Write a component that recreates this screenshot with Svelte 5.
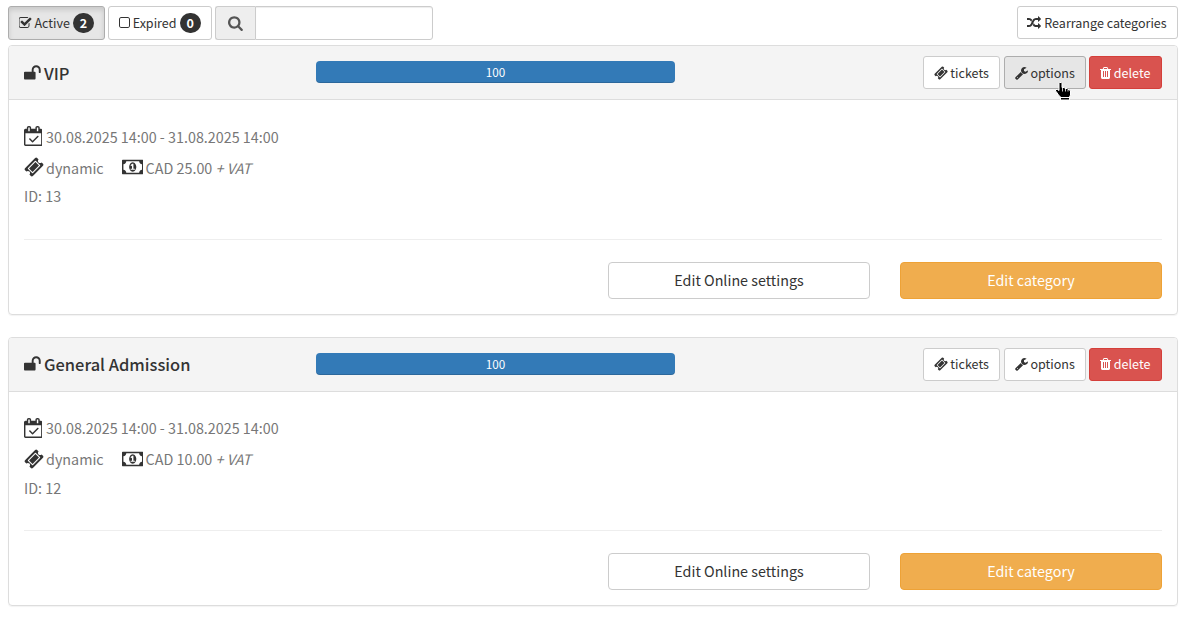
<script>
  const icons = {
    checked: [128, 1664, 'M1472 930v318q0 119-84.5 203.5t-203.5 84.5h-832q-119 0-203.5-84.5t-84.5-203.5v-832q0-119 84.5-203.5t203.5-84.5h832q63 0 117 25 15 7 18 23 3 17-9 29l-49 49q-10 10-23 10-3 0-9-2-23-6-45-6h-832q-66 0-113 47t-47 113v832q0 66 47 113t113 47h832q66 0 113-47t47-113v-254q0-13 9-22l64-64q10-10 23-10 6 0 12 3 20 8 20 29zm231-489l-814 814q-24 24-57 24t-57-24l-430-430q-24-24-24-57t24-57l110-110q24-24 57-24t57 24l263 263 647-647q24-24 57-24t57 24l110 110q24 24 24 57t-24 57z'],
    unchecked: [192, 1408, 'M1312 256h-832q-66 0-113 47t-47 113v832q0 66 47 113t113 47h832q66 0 113-47t47-113v-832q0-66-47-113t-113-47zm288 160v832q0 119-84.5 203.5t-203.5 84.5h-832q-119 0-203.5-84.5t-84.5-203.5v-832q0-119 84.5-203.5t203.5-84.5h832q119 0 203.5 84.5t84.5 203.5z'],
    search: [64, 1664, 'M1216 832q0-185-131.5-316.5t-316.5-131.5-316.5 131.5-131.5 316.5 131.5 316.5 316.5 131.5 316.5-131.5 131.5-316.5zm512 832q0 52-38 90t-90 38q-54 0-90-38l-343-342q-179 124-399 124-143 0-273.5-55.5t-225-150-150-225-55.5-273.5 55.5-273.5 150-225 225-150 273.5-55.5 273.5 55.5 225 150 150 225 55.5 273.5q0 220-124 399l343 343q37 37 37 90z'],
    random: [0, 1792, 'M666 481q-60 92-137 273-22-45-37-72.5t-40.5-63.5-51-56.5-63-35-81.5-14.5h-224q-14 0-23-9t-9-23v-192q0-14 9-23t23-9h224q250 0 410 225zm1126 799q0 14-9 23l-320 320q-9 9-23 9-13 0-22.5-9.5t-9.5-22.5v-192q-32 0-85 .5t-81 1-73-1-71-5-64-10.5-63-18.5-58-28.5-59-40-55-53.5-56-69.5q59-93 136-273 22 45 37 72.5t40.5 63.5 51 56.5 63 35 81.5 14.5h256v-192q0-14 9-23t23-9q12 0 24 10l319 319q9 9 9 23zm0-896q0 14-9 23l-320 320q-9 9-23 9-13 0-22.5-9.5t-9.5-22.5v-192h-256q-48 0-87 15t-69 45-51 61.5-45 77.5q-32 62-78 171-29 66-49.5 111t-54 105-64 100-74 83-90 68.5-106.5 42-128 16.5h-224q-14 0-23-9t-9-23v-192q0-14 9-23t23-9h224q48 0 87-15t69-45 51-61.5 45-77.5q32-62 78-171 29-66 49.5-111t54-105 64-100 74-83 90-68.5 106.5-42 128-16.5h256v-192q0-14 9-23t23-9q12 0 24 10l319 319q9 9 9 23z'],
    ticket: [0, 1792, 'M1024 452l316 316-572 572-316-316zm-211 979l618-618q19-19 19-45t-19-45l-362-362q-18-18-45-18t-45 18l-618 618q-19 19-19 45t19 45l362 362q18 18 45 18t45-18zm889-637l-907 908q-37 37-90.5 37t-90.5-37l-126-126q56-56 56-136t-56-136-136-56-136 56l-125-126q-37-37-37-90.5t37-90.5l907-906q37-37 90.5-37t90.5 37l125 125q-56 56-56 136t56 136 136 56 136-56l126 125q37 37 37 90.5t-37 90.5z'],
    wrench: [64, 1664, 'M448 1472q0-26-19-45t-45-19-45 19-19 45 19 45 45 19 45-19 19-45zm644-420l-682 682q-37 37-90 37-52 0-91-37l-106-108q-38-36-38-90 0-53 38-91l681-681q39 98 114.5 173.5t173.5 114.5zm634-435q0 39-23 106-47 134-164.5 217.5t-258.5 83.5q-185 0-316.5-131.5t-131.5-316.5 131.5-316.5 316.5-131.5q58 0 121.5 16.5t107.5 46.5q16 11 16 28t-16 28l-293 169v224l193 107q5-3 79-48.5t135.5-81 70.5-35.5q15 0 23.5 10t8.5 25z'],
    trash: [192, 1408, 'M704 1376v-704q0-14-9-23t-23-9h-64q-14 0-23 9t-9 23v704q0 14 9 23t23 9h64q14 0 23-9t9-23zm256 0v-704q0-14-9-23t-23-9h-64q-14 0-23 9t-9 23v704q0 14 9 23t23 9h64q14 0 23-9t9-23zm256 0v-704q0-14-9-23t-23-9h-64q-14 0-23 9t-9 23v704q0 14 9 23t23 9h64q14 0 23-9t9-23zm-544-992h448l-48-117q-7-9-17-11h-317q-10 2-17 11zm928 32v64q0 14-9 23t-23 9h-96v948q0 83-47 143.5t-113 60.5h-832q-66 0-113-58.5t-47-141.5v-952h-96q-14 0-23-9t-9-23v-64q0-14 9-23t23-9h309l70-167q15-37 54-63t79-26h320q40 0 79 26t54 63l70 167h309q14 0 23 9t9 23z'],
    calendar: [0, 1664, 'M1303 964l-512 512q-10 9-23 9t-23-9l-288-288q-9-10-9-23t9-22l46-46q9-9 22-9t23 9l220 220 444-444q10-9 23-9t22 9l46 46q9 9 9 22t-9 23zm-1175 700h1408v-1024h-1408v1024zm384-1216v-288q0-14-9-23t-23-9h-64q-14 0-23 9t-9 23v288q0 14 9 23t23 9h64q14 0 23-9t9-23zm768 0v-288q0-14-9-23t-23-9h-64q-14 0-23 9t-9 23v288q0 14 9 23t23 9h64q14 0 23-9t9-23zm384-64v1280q0 52-38 90t-90 38h-1408q-52 0-90-38t-38-90v-1280q0-52 38-90t90-38h128v-96q0-66 47-113t113-47h64q66 0 113 47t47 113v96h384v-96q0-66 47-113t113-47h64q66 0 113 47t47 113v96h128q52 0 90 38t38 90z'],
    money: [0, 1920, 'M768 1152h384v-96h-128v-448h-114l-148 137 77 80q42-37 55-57h2v288h-128v96zm512-256q0 70-21 142t-59.5 134-101.5 101-138 39-138-39-101.5-101-59.5-134-21-142 21-142 59.5-134 101.5-101 138-39 138 39 101.5 101 59.5 134 21 142zm512 256v-512q-106 0-181-75t-75-181h-1152q0 106-75 181t-181 75v512q106 0 181 75t75 181h1152q0-106 75-181t181-75zm128-832v1152q0 26-19 45t-45 19h-1792q-26 0-45-19t-19-45v-1152q0-26 19-45t45-19h1792q26 0 45 19t19 45z'],
    unlock: [64, 1664, 'M1728 576v256q0 26-19 45t-45 19h-64q-26 0-45-19t-19-45v-256q0-106-75-181t-181-75-181 75-75 181v192h96q40 0 68 28t28 68v576q0 40-28 68t-68 28h-960q-40 0-68-28t-28-68v-576q0-40 28-68t68-28h672v-192q0-185 131.5-316.5t316.5-131.5 316.5 131.5 131.5 316.5z']
  };
  const categories = [
    { id: 13, name: 'VIP', price: 'CAD 25.00', hovered: true },
    { id: 12, name: 'General Admission', price: 'CAD 10.00', hovered: false }
  ];
</script>

{#snippet icon(name, size)}
  <svg class="icon" viewBox="{icons[name][0]} 0 {icons[name][1]} 1792" width={(icons[name][1] / 1792) * size} height={size}><path d={icons[name][2]} /></svg>
{/snippet}

<main>
  <header class="toolbar">
    <button class="btn toggle active">{@render icon('checked', 14)}<span>Active</span><b class="badge">2</b></button>
    <button class="btn toggle expired">{@render icon('unchecked', 14)}<span>Expired</span><b class="badge">0</b></button>
    <div class="search">
      <span class="addon">{@render icon('search', 16)}</span>
      <input type="text" aria-label="Search" />
    </div>
    <button class="btn rearrange">{@render icon('random', 14)}<span>Rearrange categories</span></button>
  </header>

  {#each categories as c}
    <section class="panel">
      <div class="heading">
        <h3>{@render icon('unlock', 18)}<span>{c.name}</span></h3>
        <div class="progress"><span>100</span></div>
        <div class="actions">
          <button class="btn small tickets">{@render icon('ticket', 14)}<span>tickets</span></button>
          <button class="btn small options" class:hovered={c.hovered}>
            {@render icon('wrench', 14)}<span>options</span>
            {#if c.hovered}
              <svg class="cursor" viewBox="0 0 18 20" width="18" height="20">
                <path d="M5.500 1.500h1.500l1 1v4h2l1 1h2l1 1h1l1.500 1.500v4l-1 2v3H6.500v-3l-2-2-2-3-1-1v-1.500h2l1.500 1V2.500z" fill="#000" stroke="#fff" stroke-width="1" />
                <path d="M8.500 7v3.500M11.500 8v2.500M14 9v1.500" stroke="#fff" stroke-width="0.800" />
                <path d="M7 16.500h8.500" stroke="#fff" stroke-width="1" />
              </svg>
            {/if}
          </button>
          <button class="btn small delete">{@render icon('trash', 14)}<span>delete</span></button>
        </div>
      </div>
      <div class="body">
        <div class="line date">{@render icon('calendar', 20)}<span>30.08.2025 14:00 - 31.08.2025 14:00</span></div>
        <div class="line info">
          {@render icon('ticket', 20)}<span class="kind">dynamic</span>
          {@render icon('money', 20)}<span>{c.price} <i>+ VAT</i></span>
        </div>
        <div class="line id">ID: {c.id}</div>
        <hr />
        <div class="footer">
          <button class="btn large">Edit Online settings</button>
          <button class="btn large warning">Edit category</button>
        </div>
      </div>
    </section>
  {/each}
</main>

<style>
  :global(body) { background: #fff; }
  main {
    box-sizing: border-box;
    width: 1188px;
    height: 617px;
    overflow: hidden;
    padding: 6px 10px 0 8px;
    color: #333;
    font: 14.33px/22px "Noto Sans CJK SC", "Noto Sans", sans-serif;
  }
  .icon { display: block; flex: none; fill: #333; }
  .toolbar { display: flex; align-items: flex-start; height: 39px; }
  .btn {
    box-sizing: border-box;
    display: flex;
    align-items: center;
    justify-content: center;
    height: 33px;
    margin: 0;
    padding: 0 1px 0 0;
    border: 1px solid #ccc;
    border-radius: 3px;
    background: #fff;
    color: #333;
    font: 12.54px/20px "Noto Sans CJK SC", "Noto Sans", sans-serif;
    white-space: nowrap;
    gap: 3px;
  }
  .toggle { height: 34px; margin-right: 3px; padding-right: 0.4px; gap: 2.8px; }
  .active {
    width: 97px;
    border-color: #adadad;
    background: #e6e6e6;
    box-shadow: inset 0 3px 5px rgba(0, 0, 0, 0.125);
  }
  .expired { width: 104px; }
  .badge {
    width: 21px;
    height: 20px;
    margin-left: 0.4px;
    border-radius: 10px;
    background: #333;
    color: #fff;
    text-align: center;
    font-size: 12.54px;
    line-height: 19px;
  }
  .search { display: flex; width: 218px; height: 34px; }
  .addon {
    box-sizing: border-box;
    display: flex;
    align-items: center;
    justify-content: center;
    width: 40px;
    border: 1px solid #ccc;
    border-right: 0;
    border-radius: 3px 0 0 3px;
    background: #eee;
  }
  .addon .icon { fill: #555; }
  input {
    box-sizing: border-box;
    width: 178px;
    height: 34px;
    padding: 0 12px;
    border: 1px solid #ccc;
    border-radius: 0 3px 3px 0;
    box-shadow: inset 0 1px 1px rgba(0, 0, 0, 0.075);
  }
  .rearrange { width: 161px; margin-left: auto; }
  .panel {
    box-sizing: border-box;
    width: 1170px;
    height: 269.6px;
    margin-bottom: 22px;
    border: 1px solid #ddd;
    border-radius: 4px;
    box-shadow: 0 1px 1px rgba(0, 0, 0, 0.05);
  }
  .heading {
    box-sizing: border-box;
    display: flex;
    height: 54px;
    padding: 10px 15px 0;
    border-bottom: 1px solid #ddd;
    border-radius: 3px 3px 0 0;
    background: #f4f4f4;
  }
  h3 {
    box-sizing: border-box;
    display: flex;
    align-items: center;
    width: 292px;
    height: 34px;
    margin: 0;
    padding-bottom: 0.4px;
    gap: 3.3px;
    font-size: 16.45px;
    font-weight: 500;
    line-height: 24px;
  }
  .progress {
    width: 359px;
    height: 22px;
    margin-top: 5px;
    border-radius: 4px;
    background: #337ab7;
    box-shadow: inset 0 -1px 0 rgba(0, 0, 0, 0.15);
    color: #fff;
    text-align: center;
    font-size: 11.7px;
    line-height: 22px;
  }
  .actions { display: flex; margin-left: auto; }
  .small { padding-right: 0.4px; gap: 2.6px; }
  .tickets { width: 77px; margin-right: 4px; }
  .options { position: relative; width: 82px; margin-right: 3px; }
  .hovered { border-color: #adadad; background: #e6e6e6; }
  .delete { width: 73px; border-color: #d43f3a; background: #d9534f; color: #fff; }
  .delete .icon { fill: #fff; }
  .cursor { position: absolute; left: 49px; top: 24px; z-index: 2; }
  .body { padding: 21.1px 15px 0; color: #777; }
  .line { display: flex; align-items: center; gap: 3px; height: 31px; }
  .date { gap: 4px; }
  .date .icon, .info .icon:first-child { margin-left: -0.5px; }
  .date .icon { margin-bottom: 1px; }
  .info { gap: 2.5px; }
  .info .icon { margin-bottom: 1px; }
  .kind { margin-right: 15.5px; }
  .id { height: 26px; margin-top: 0.3px; }
  hr { height: 1px; margin: 29.2px 0 22px; border: 0; background: #eee; }
  .footer { display: flex; justify-content: flex-end; gap: 30px; }
  .large { width: 262px; height: 37px; padding: 0 0 1px; border-radius: 4px; font-size: 14.33px; line-height: 22px; }
  .warning { border-color: #eea236; background: #f0ad4e; color: #fff; }
</style>
